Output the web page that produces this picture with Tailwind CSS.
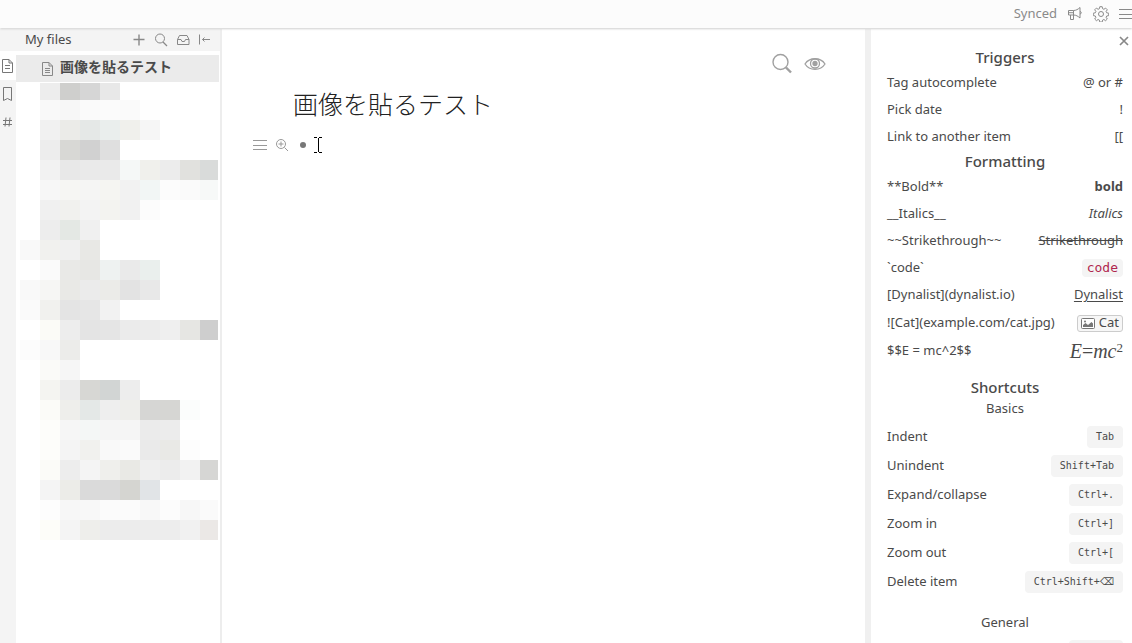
<!DOCTYPE html>
<html lang="ja">
<head>
<meta charset="utf-8">
<meta name="viewport" content="width=device-width, initial-scale=1">
<title>画像を貼るテスト - Dynalist</title>
<script src="https://cdn.jsdelivr.net/npm/@tailwindcss/browser@4"></script>
</head>
<body class="flex h-screen flex-col overflow-hidden bg-white font-['Noto_Sans','Noto_Sans_CJK_JP',sans-serif] text-[13px] text-[#4a4a4a]">

<header class="z-10 flex h-7 shrink-0 items-center justify-end gap-[10px] bg-[#fcfcfc] text-[#8a8a8a] shadow-[0_1px_2px_#cfcfcf]">
  <span>Synced</span>
  <button aria-label="News" class="size-4">
    <svg viewBox="0 0 16 16" class="size-4" fill="none" stroke="currentColor" stroke-linejoin="round"><path d="M1.500 4.500h5c2.500 0 4.500-1.200 6.500-3v10.500c-2-1.800-4-3-6.500-3h-5zM6.500 4.500V9M3.500 9v4.500h3V9M1.500 6.700h5M13 5.500c1.700 0 1.700 2.500 0 2.500"/></svg>
  </button>
  <button aria-label="Settings" class="size-4">
    <svg viewBox="0 0 16 16" class="size-4" fill="none" stroke="currentColor" stroke-linejoin="round"><path d="M6.800.7h2.400l.4 2 1.300.6 1.700-1.200 1.700 1.700-1.200 1.700.6 1.300 2 .4v2.400l-2 .4-.6 1.300 1.200 1.700-1.700 1.700-1.700-1.200-1.300.6-.4 2H6.800l-.4-2-1.300-.6-1.700 1.200-1.700-1.700 1.200-1.700-.6-1.300-2-.4V7.200l2-.4.6-1.300-1.200-1.700 1.700-1.700 1.700 1.200 1.300-.6z"/><circle cx="8" cy="8" r="2.500"/></svg>
  </button>
  <button aria-label="Menu" class="h-4 w-[13px] overflow-hidden">
    <svg viewBox="0 0 16 16" class="size-4 max-w-none" fill="none" stroke="currentColor"><path d="M0 3.500h16M0 8.500h16M0 12.500h16"/></svg>
  </button>
</header>

<div class="flex min-h-0 flex-1 pt-px">

  <aside class="flex w-[222px] shrink-0 flex-col border-r-2 border-[#ededed]">
    <div class="flex h-[22px] shrink-0 items-center bg-[#f4f4f4] pr-2 pl-[25px]">
      <h2 class="flex-1">My files</h2>
      <div class="flex items-center gap-2 text-[#888]">
        <button aria-label="New" class="size-[14px]"><svg viewBox="0 0 14 14" class="size-[14px]" fill="none" stroke="currentColor" stroke-width="1.400"><path d="M1.500 6.500h11M7 1.500v11"/></svg></button>
        <button aria-label="Search files" class="size-[14px]"><svg viewBox="0 0 14 14" class="size-[14px]" fill="none" stroke="currentColor"><circle cx="6" cy="5.500" r="4.500"/><path d="M9 9l4 4" stroke-width="1.300"/></svg></button>
        <button aria-label="Inbox" class="size-[14px]"><svg viewBox="0 0 14 14" class="size-[14px]" fill="none" stroke="currentColor" stroke-linejoin="round"><path d="M1.500 6.500l2-4h7.500l2 4v5H1.500zM1.500 6.500H5L6 8.500h2.500l1-2H13"/></svg></button>
        <button aria-label="Collapse pane" class="size-[14px]"><svg viewBox="0 0 14 14" class="size-[14px]" fill="none" stroke="currentColor"><path d="M1.500 1.500v10M4.500 6.500H12M6.500 4.500l-2 2 2 2"/></svg></button>
      </div>
    </div>
    <div class="flex min-h-0 flex-1">
      <nav class="flex w-4 shrink-0 flex-col bg-[#f4f4f4] text-[#777]">
        <button aria-label="Files" class="flex h-[29px] items-center bg-white pl-px"><svg viewBox="0 0 13 14" class="h-[14px] w-[13px]" fill="none" stroke="currentColor"><path d="M1.500.500h6.500l3.500 3.500v9.500h-10zM8 .500V4h3.500M4 6.500h5M4 9.500h5"/></svg></button>
        <button aria-label="Bookmarks" class="flex h-7 items-center pl-px"><svg viewBox="0 0 13 14" class="h-[14px] w-[13px]" fill="none" stroke="currentColor"><path d="M2.500.500h8v13l-4-2-4 2z"/></svg></button>
        <button aria-label="Tags" class="flex h-7 items-center pl-px"><svg viewBox="0 0 13 14" class="h-[14px] w-[13px]" fill="none" stroke="currentColor"><path d="M5 2.500L4 11.500M9 2.500L8 11.500M2 5.500h9M2 9.500h9"/></svg></button>
      </nav>
      <div class="min-w-0 flex-1 pt-1 pr-px">
        <a href="#" class="flex h-[27px] items-center gap-[6px] bg-[#ebebeb] pl-[25px] text-[14px] font-semibold">
          <svg viewBox="0 0 13 14" class="h-[14px] w-[13px] text-[#888]" fill="none" stroke="currentColor"><path d="M1.500.500h6.500l3.500 3.500v9.500h-10zM8 .500V4h3.500M4 6.500h5M4 8.500h5M4 10.500h5"/></svg>
          <span class="pb-1">画像を貼るテスト</span>
        </a>
        <div id="mosaic" class="mt-px ml-1 grid w-[198px] grid-cols-[repeat(9,20px)_18px] grid-rows-[17px] auto-rows-[20px]"></div>
      </div>
    </div>
  </aside>

  <main class="min-w-0 flex-1">
    <div class="flex justify-end gap-[11px] pt-6 pr-[39px] text-[#a0a0a0]">
      <button aria-label="Search" class="size-[22px]"><svg viewBox="0 0 22 22" class="size-[22px]" fill="none" stroke="currentColor"><circle cx="9.500" cy="9" r="7.500" stroke-width="1.400"/><path d="M15 14.500l5 5" stroke-width="2.400"/></svg></button>
      <button aria-label="View" class="size-[22px]"><svg viewBox="0 0 22 22" class="size-[22px]" fill="none" stroke="currentColor" stroke-width="1.300"><path d="M1 11c4.500-7 15.500-7 20 0-4.500 7-15.500 7-20 0z"/><circle cx="11" cy="10.500" r="4.500"/><circle cx="11" cy="10.500" r="2" fill="currentColor"/></svg></button>
    </div>
    <h1 class="mt-[11px] pl-[71px] text-[25px] leading-9 font-light text-[#222]">画像を貼るテスト</h1>
    <div class="mt-[14px] flex h-[18px] items-center pl-[30px] text-[#999]">
      <button aria-label="Item menu" class="mr-[7px] h-4 w-4"><svg viewBox="0 0 16 16" class="size-4" fill="none" stroke="currentColor"><path d="M1 3.500h14M1 8.500h14M1 12.500h14"/></svg></button>
      <button aria-label="Zoom" class="mr-[11px] h-4 w-[14px]"><svg viewBox="0 0 14 16" class="h-4 w-[14px]" fill="none" stroke="currentColor"><circle cx="6" cy="7" r="4.500"/><path d="M6 4.500v5M3.500 7h5M9.500 10.500l3.500 3.500"/></svg></button>
      <span class="mr-2 size-[6px] rounded-full bg-[#777]"></span>
      <svg viewBox="0 0 8 16" class="h-4 w-2" fill="none" stroke="#000"><path d="M0 .500h3M5 .500h3M0 15.500h3M5 15.500h3M4.500 1v14"/></svg>
    </div>
  </main>

  <aside class="relative w-[267px] shrink-0 overflow-hidden border-l-6 border-[#f0f0f0] pt-[17px] pr-[9px] pl-4">
    <button aria-label="Close" class="absolute top-[7px] right-[3px] size-[10px] text-[#888]"><svg viewBox="0 0 10 10" class="size-[10px]" fill="none" stroke="currentColor" stroke-width="1.700"><path d="M1 1l8 8M9 1l-8 8"/></svg></button>

    <h3 class="mb-px text-center text-[15px] leading-[22px] font-medium">Triggers</h3>
    <dl>
      <div class="flex h-[27px] items-center justify-between"><dt>Tag autocomplete</dt><dd>@ or #</dd></div>
      <div class="flex h-[27px] items-center justify-between"><dt>Pick date</dt><dd>!</dd></div>
      <div class="flex h-[27px] items-center justify-between"><dt>Link to another item</dt><dd>[[</dd></div>
    </dl>

    <h3 class="mb-px text-center text-[15px] leading-[22px] font-medium">Formatting</h3>
    <dl>
      <div class="flex h-[27px] items-center justify-between"><dt>**Bold**</dt><dd class="font-bold">bold</dd></div>
      <div class="flex h-[27px] items-center justify-between"><dt>__Italics__</dt><dd class="italic">Italics</dd></div>
      <div class="flex h-[27px] items-center justify-between"><dt>~~Strikethrough~~</dt><dd class="line-through">Strikethrough</dd></div>
      <div class="flex h-[27px] items-center justify-between"><dt>`code`</dt><dd class="flex"><code class="rounded bg-[#f4f4f4] px-[5px] font-['DejaVu_Sans_Mono',monospace] leading-[18px] text-[#b0264e]">code</code></dd></div>
      <div class="flex h-7 items-center justify-between"><dt>[Dynalist](dynalist.io)</dt><dd><a href="#" class="underline underline-offset-2">Dynalist</a></dd></div>
      <div class="flex h-7 items-center justify-between"><dt>![Cat](example.com/cat.jpg)</dt><dd class="flex h-[17px] items-center gap-1 rounded-[3px] border border-[#ccc] bg-[#f7f7f7] px-[3px]"><svg viewBox="0 0 14 11" class="h-[11px] w-[14px]"><rect x=".5" y=".5" width="13" height="10" rx="1" fill="#fff" stroke="#777"/><path d="M2 9V7l2.500-2L7 7l3.500-3L12 5.500V9z" fill="#777"/><circle cx="4" cy="3.500" r="1" fill="#777"/></svg>Cat</dd></div>
      <div class="flex h-7 items-center justify-between"><dt>$$E = mc^2$$</dt><dd class="font-['Liberation_Serif',serif] text-[20px] leading-5"><i>E</i>=<i>mc</i><sup class="text-[13px]">2</sup></dd></div>
    </dl>

    <h3 class="mt-[11px] mb-px text-center text-[15px] leading-[22px] font-medium">Shortcuts</h3>
    <h4 class="mb-[5px] text-center leading-[18px]">Basics</h4>
    <dl>
      <div class="flex h-[29px] items-center justify-between"><dt>Indent</dt><dd class="flex"><kbd class="rounded bg-[#f4f4f4] px-[9px] font-['DejaVu_Sans_Mono',monospace] text-[10px] leading-[22px]">Tab</kbd></dd></div>
      <div class="flex h-[29px] items-center justify-between"><dt>Unindent</dt><dd class="flex"><kbd class="rounded bg-[#f4f4f4] px-[9px] font-['DejaVu_Sans_Mono',monospace] text-[10px] leading-[22px]">Shift+Tab</kbd></dd></div>
      <div class="flex h-[29px] items-center justify-between"><dt>Expand/collapse</dt><dd class="flex"><kbd class="rounded bg-[#f4f4f4] px-[9px] font-['DejaVu_Sans_Mono',monospace] text-[10px] leading-[22px]">Ctrl+.</kbd></dd></div>
      <div class="flex h-[29px] items-center justify-between"><dt>Zoom in</dt><dd class="flex"><kbd class="rounded bg-[#f4f4f4] px-[9px] font-['DejaVu_Sans_Mono',monospace] text-[10px] leading-[22px]">Ctrl+]</kbd></dd></div>
      <div class="flex h-[29px] items-center justify-between"><dt>Zoom out</dt><dd class="flex"><kbd class="rounded bg-[#f4f4f4] px-[9px] font-['DejaVu_Sans_Mono',monospace] text-[10px] leading-[22px]">Ctrl+[</kbd></dd></div>
      <div class="flex h-[29px] items-center justify-between"><dt>Delete item</dt><dd class="flex"><kbd class="flex rounded bg-[#f4f4f4] px-[9px] font-['DejaVu_Sans_Mono',monospace] text-[10px] leading-[22px]">Ctrl+Shift+<span class="font-['DejaVu_Sans',sans-serif]">⌫</span></kbd></dd></div>
    </dl>

    <h4 class="mt-[17px] mb-[5px] text-center leading-[18px]">General</h4>
    <dl>
      <div class="flex h-[29px] items-center justify-between"><dt></dt><dd class="flex h-[22px] w-[54px] rounded bg-[#f4f4f4]"></dd></div>
    </dl>
  </aside>
</div>

<script>
// Pixelated file names: one line per row of blocks, "-" leaves a block empty.
const rows = `- ededed cfcfcd d6d6d6 e8e8e8
- f9f9f9 f7f7f7 fafafa fbfbfb fafafa fefefe
- f1f1f1 ebebe8 e5e8e7 eaeeed f0f0ec f6f6f6
- ededed d8d8d5 d1d1d1 dfdfdf
- f2f2f2 e8e8e8 eaeaea eaeaea f5f8f7 f0f0ec ececec e1e1de d9dbda
- f7f7f7 f6f6f3 f5f5f4 f5f5f2 f2f2f2 f2f6f5 fcfcfc fafafa f7f9f8
- f0f0f0 f1f1ee f3f3f3 f3f3f0 f1f1f1 fcfcfc
- ededed e4e8e4 f0f0f0
f9f9f9 f1f1ee f0f0f0 e8e8e5
- fafafa e9e9e7 e7e7e4 eef2f1 eaeaea eaefed
f9f9f9 f6f6f4 e9e9e6 ebebeb ebebe8 e3e3e3 e8e8e8
fafafa f1f1ee e4e4e4 e6e6e6 f2f2f2
- fbfbf7 ededed e4e4e4 e5e5e5 ebebeb ececec efefef e6e6e3 cecece
fcfcfc f8f8f8 ececea
- fafaf8 f6f6f6
- f4f4f1 ececec d7d7d4 d2d5d4 ededed
- fbfbf8 eeeeeb e4e8e7 eeeeee eeeeeb d6d6d4 d6d6d3 fbfdfc
- fdfdfa f6f6f6 f4f7f6 f5f5f5 f5f5f5 ebebeb ececec
- fdfdfa f4f4f4 f1f1ee f9f9f9 fafafa eaeaea e9e9e6 fdfdfd
- fbfbf8 ededed f4f4f4 efefec e9e9e5 efefef ececec f2f2f2 d6d6d4
- f4f4f4 ecece8 dadada dadada d5d5d1 e1e4e7
- fdfdfd f7f7f7 f8f8f8 fbfbfb fbfbfb f8f8f8 fcfcfc f7f7f7 fafafa
- fdfdf9 f4f4f4 eeeeeb ececec ececec ededed ededed f1f1f1 ebe8e6`.split("\n");
const mosaic = document.getElementById("mosaic");
for (const row of rows) {
  const cells = row.split(" ");
  for (let i = 0; i < 10; i++) {
    const block = document.createElement("div");
    if (cells[i] && cells[i] !== "-") block.style.backgroundColor = "#" + cells[i];
    mosaic.append(block);
  }
}
</script>
</body>
</html>
